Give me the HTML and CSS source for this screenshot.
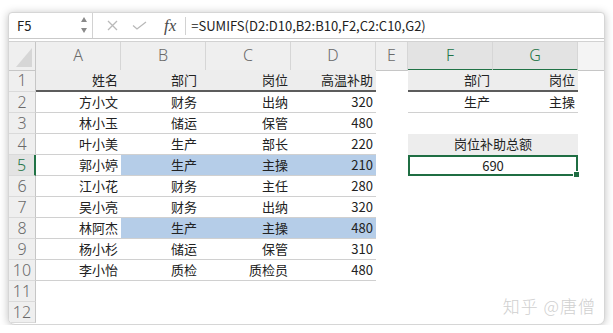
FILE: index.html
```html
<!DOCTYPE html>
<html lang="zh-CN">
<head>
  <meta charset="UTF-8">
  <title>SUMIFS</title>
  <link rel="stylesheet" href="styles.css">
</head>
<body>

  <div class="window">

    <!-- Formula bar -->
    <div class="formula-bar">
      <div class="name-box">
        <span>F5</span>
        <svg class="spin" width="6" height="17" viewBox="0 0 6 17">
          <path d="M3 0 L6 5 L0 5 Z" fill="#8a8a8a"/>
          <path d="M0 11 L6 11 L3 16 Z" fill="#8a8a8a"/>
        </svg>
      </div>
      <div class="tools">
        <svg class="cancel" width="11" height="11" viewBox="0 0 11 11">
          <path d="M1 1 L10 10 M10 1 L1 10" stroke="#b9b9b9" stroke-width="1.3" fill="none"/>
        </svg>
        <svg class="enter" width="15" height="9" viewBox="0 0 15 9">
          <path d="M1 4.5 L5 8 L14 1" stroke="#b9b9b9" stroke-width="1.3" fill="none"/>
        </svg>
        <span class="fx">fx</span>
        <span class="sep"></span>
      </div>
      <div class="formula">=SUMIFS(D2:D10,B2:B10,F2,C2:C10,G2)</div>
    </div>

    <!-- Sheet -->
    <div class="sheet">
      <div class="row head">
        <div class="corner"></div>
        <div class="col">A</div>
        <div class="col">B</div>
        <div class="col">C</div>
        <div class="col">D</div>
        <div class="col">E</div>
        <div class="col sel">F</div>
        <div class="col sel">G</div>
        <div class="col rest"></div>
      </div>

      <div class="row first">
        <div class="rh">1</div>
        <div class="c th">姓名</div>
        <div class="c th b">部门</div>
        <div class="c th">岗位</div>
        <div class="c th">高温补助</div>
        <div class="c"></div>
        <div class="c th">部门</div>
        <div class="c th">岗位</div>
        <div class="c"></div>
      </div>

      <div class="row">
        <div class="rh">2</div>
        <div class="c line">方小文</div>
        <div class="c line b">财务</div>
        <div class="c line">出纳</div>
        <div class="c line">320</div>
        <div class="c"></div>
        <div class="c line">生产</div>
        <div class="c line">主操</div>
        <div class="c"></div>
      </div>

      <div class="row">
        <div class="rh">3</div>
        <div class="c line">林小玉</div>
        <div class="c line b">储运</div>
        <div class="c line">保管</div>
        <div class="c line">480</div>
        <div class="c"></div>
        <div class="c"></div>
        <div class="c"></div>
        <div class="c"></div>
      </div>

      <div class="row">
        <div class="rh">4</div>
        <div class="c line">叶小美</div>
        <div class="c line b">生产</div>
        <div class="c line">部长</div>
        <div class="c line">220</div>
        <div class="c"></div>
        <div class="c merged title">岗位补助总额</div>
        <div class="c"></div>
      </div>

      <div class="row">
        <div class="rh sel">5</div>
        <div class="c line">郭小婷</div>
        <div class="c line b hit">生产</div>
        <div class="c line hit">主操</div>
        <div class="c line hit">210</div>
        <div class="c"></div>
        <div class="c merged active">690<span class="handle"></span></div>
        <div class="c"></div>
      </div>

      <div class="row">
        <div class="rh">6</div>
        <div class="c line">江小花</div>
        <div class="c line b">财务</div>
        <div class="c line">主任</div>
        <div class="c line">280</div>
        <div class="c"></div>
        <div class="c"></div>
        <div class="c"></div>
        <div class="c"></div>
      </div>

      <div class="row">
        <div class="rh">7</div>
        <div class="c line">吴小亮</div>
        <div class="c line b">财务</div>
        <div class="c line">出纳</div>
        <div class="c line">320</div>
        <div class="c"></div>
        <div class="c"></div>
        <div class="c"></div>
        <div class="c"></div>
      </div>

      <div class="row">
        <div class="rh">8</div>
        <div class="c line">林阿杰</div>
        <div class="c line b hit">生产</div>
        <div class="c line hit">主操</div>
        <div class="c line hit">480</div>
        <div class="c"></div>
        <div class="c"></div>
        <div class="c"></div>
        <div class="c"></div>
      </div>

      <div class="row">
        <div class="rh">9</div>
        <div class="c line">杨小杉</div>
        <div class="c line b">储运</div>
        <div class="c line">保管</div>
        <div class="c line">310</div>
        <div class="c"></div>
        <div class="c"></div>
        <div class="c"></div>
        <div class="c"></div>
      </div>

      <div class="row">
        <div class="rh">10</div>
        <div class="c line">李小怡</div>
        <div class="c line b">质检</div>
        <div class="c line">质检员</div>
        <div class="c line">480</div>
        <div class="c"></div>
        <div class="c"></div>
        <div class="c"></div>
        <div class="c"></div>
      </div>

      <div class="row">
        <div class="rh">11</div>
      </div>

      <div class="row">
        <div class="rh">12</div>
      </div>
    </div>

    <div class="watermark">知乎 @唐僧</div>
  </div>

</body>
</html>
```

FILE: styles.css
```css
/* Base */
body {
  margin: 0;
  background: #fff;
  font-family: "Noto Sans CJK SC", sans-serif;
  color: #222;
}

/* Window frame */
.window {
  box-sizing: border-box;
  width: 597px;
  height: 313px;
  margin: 12px 0 0 8px;
  border: 1px solid #d6d6d6;
  border-radius: 4px 4px 7px 7px;
  box-shadow: 0 1px 8px rgba(0, 0, 0, 0.25);
  background: #fff;
  overflow: hidden;
  position: relative;
}

/* Formula bar */
.formula-bar {
  display: flex;
  align-items: center;
  box-sizing: border-box;
  height: 26px;
  border-bottom: 1px solid #c9c9c9;
  font-size: 13px;
}

.name-box {
  box-sizing: border-box;
  width: 84px;
  height: 100%;
  display: flex;
  align-items: center;
  justify-content: space-between;
  padding: 0 5px 0 8px;
  border-right: 1px solid #d2d2d2;
}

.tools {
  display: flex;
  align-items: center;
  height: 100%;
  padding-left: 14px;
}

.enter {
  margin-left: 14px;
}

.fx {
  margin-left: 17px;
  font-family: "Liberation Serif", serif;
  font-style: italic;
  font-size: 17px;
  color: #4a4a4a;
}

.sep {
  width: 1px;
  height: 18px;
  margin-left: 9px;
  background: #d2d2d2;
}

.formula {
  padding-left: 5px;
  white-space: nowrap;
}

/* Sheet grid */
.sheet {
  margin-top: 2px;
  border-top: 1px solid #d2d2d2;
}

.row {
  display: grid;
  grid-template-columns: 27px 85px 85px 85px 85px 32px 85px 85px 1fr;
  height: 21px;
  font-size: 13px;
}

.row.first {
  height: 22px;
}

.row.head {
  height: 28px;
}

.row > div {
  box-sizing: border-box;
}

/* Column and row headers */
.corner,
.col,
.rh {
  background: #efefef;
  color: #6a6a6a;
  font-family: "Noto Sans", sans-serif;
  font-size: 16px;
  font-weight: 300;
  text-align: center;
}

.corner {
  position: relative;
  border-right: 1px solid #c6c6c6;
  border-bottom: 1px solid #c6c6c6;
}

.corner::after {
  content: "";
  position: absolute;
  right: 3px;
  bottom: 3px;
  border-style: solid;
  border-width: 0 0 19px 16px;
  border-color: transparent transparent #d6d6d6 transparent;
}

.col {
  line-height: 27px;
  border-right: 1px solid #d6d6d6;
  border-bottom: 1px solid #c6c6c6;
}

.col.sel {
  background: #e3e3e3;
  color: #217346;
  border-bottom: 2px solid #217346;
}

.col.rest {
  background: #f4f4f4;
  border-right: none;
}

.rh {
  line-height: 20px;
  border-right: 1px solid #c6c6c6;
  border-bottom: 1px solid #dadada;
}

.row.first .rh {
  line-height: 21px;
}

.rh.sel {
  background: #e3e3e3;
  color: #217346;
  border-right: 2px solid #217346;
}

/* Cells */
.c {
  padding: 0 3px;
  text-align: right;
  line-height: 20px;
  white-space: nowrap;
}

.c.b {
  padding-right: 9px;
}

.c.th {
  background: #ededed;
  border-bottom: 2px solid #5c5c5c;
}

.c.line {
  border-bottom: 1px solid #d0d0d0;
}

.c.hit {
  background: #b5cde8;
}

.merged {
  grid-column: span 2;
  text-align: center;
}

.merged.title {
  background: #ededed;
}

.merged.active {
  position: relative;
  border: 2px solid #1f6e43;
  line-height: 17px;
}

.handle {
  position: absolute;
  right: -4px;
  bottom: -4px;
  width: 5px;
  height: 5px;
  background: #1f6e43;
  border: 1px solid #fff;
}

/* Watermark */
.watermark {
  position: absolute;
  right: 8px;
  bottom: 6px;
  font-size: 17px;
  font-weight: 300;
  color: #d0d0d0;
  letter-spacing: 1px;
}
```
